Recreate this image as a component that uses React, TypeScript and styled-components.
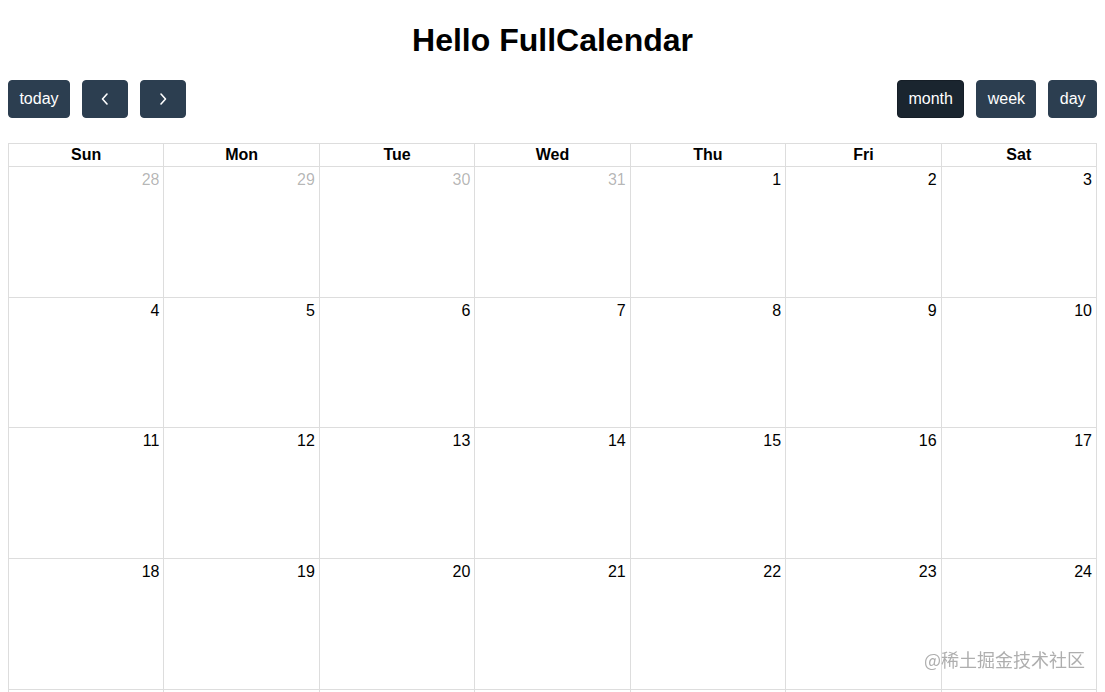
import React from 'react';
import styled, { createGlobalStyle, css } from 'styled-components';

const GlobalStyle = createGlobalStyle`
  body {
    margin: 0 8px;
    font-family: "Liberation Sans", Arial, Helvetica, sans-serif;
    color: #000;
    background: #fff;
  }
`;

const Page = styled.div`
  display: flow-root;
`;

const Title = styled.h1`
  font-size: 32px;
  font-weight: 700;
  text-align: center;
  margin: 22px 0 21px;
  line-height: 37px;
`;

const Toolbar = styled.div`
  display: flex;
  justify-content: space-between;
  align-items: center;
  margin-bottom: 25px;
`;

const ButtonGroup = styled.div`
  display: flex;
  gap: 12px;
`;

const ToolButton = styled.button<{ $active?: boolean; $icon?: boolean }>`
  display: inline-flex;
  align-items: center;
  justify-content: center;
  height: 38px;
  padding: 0 10.4px;
  font-family: "Liberation Sans", Arial, Helvetica, sans-serif;
  font-size: 16px;
  line-height: 24px;
  color: #fff;
  background: #2c3e50;
  border: 1px solid #2c3e50;
  border-radius: 4px;
  cursor: pointer;
  ${(p) =>
    p.$active &&
    css`
      background: #1a252f;
      border-color: #151e27;
    `}
  ${(p) =>
    p.$icon &&
    css`
      width: 46px;
    `}
`;

const Grid = styled.div`
  display: grid;
  grid-template-columns: repeat(7, 1fr);
  border-right: 1px solid #ddd;
  border-bottom: 1px solid #ddd;
`;

const HeadCell = styled.div`
  border-left: 1px solid #ddd;
  border-top: 1px solid #ddd;
  padding: 2px 4px;
  height: 23px;
  box-sizing: border-box;
  text-align: center;
  font-weight: 700;
  font-size: 16px;
  line-height: 18px;
`;

const DayCell = styled.div`
  border-left: 1px solid #ddd;
  border-top: 1px solid #ddd;
  height: 130.7px;
  box-sizing: border-box;
  display: flex;
  justify-content: flex-end;
  align-items: flex-start;
`;

const DayNumber = styled.span<{ $other?: boolean }>`
  padding: 4px;
  font-size: 16px;
  line-height: 18px;
  color: ${(p) => (p.$other ? 'rgba(0, 0, 0, 0.3)' : '#000')};
`;

const Watermark = styled.div`
  position: fixed;
  right: 20px;
  bottom: 20px;
  font-family: "Noto Sans CJK SC", "Liberation Sans", sans-serif;
  font-size: 18px;
  color: rgba(140, 140, 140, 0.7);
  text-shadow: 0 0 1px rgba(255, 255, 255, 0.8);
  pointer-events: none;
`;

const Chevron: React.FC<{ dir: 'left' | 'right' }> = ({ dir }) => (
  <svg width="10" height="16" viewBox="0 0 10 16" fill="none">
    <path
      d={dir === 'left' ? 'M7 3 L2.5 8 L7 13' : 'M3 3 L7.5 8 L3 13'}
      stroke="#fff"
      strokeWidth="1.6"
      strokeLinecap="round"
      strokeLinejoin="round"
    />
  </svg>
);

const weekdays = ['Sun', 'Mon', 'Tue', 'Wed', 'Thu', 'Fri', 'Sat'];

// June 2023, six weeks starting Sun May 28
const buildDays = () => {
  const days: { n: number; other: boolean }[] = [];
  [28, 29, 30, 31].forEach((n) => days.push({ n, other: true }));
  for (let n = 1; n <= 30; n++) days.push({ n, other: false });
  let n = 1;
  while (days.length < 42) days.push({ n: n++, other: true });
  return days;
};

const App: React.FC = () => {
  const days = buildDays();
  return (
    <Page>
      <GlobalStyle />
      <Title>Hello FullCalendar</Title>
      <Toolbar>
        <ButtonGroup>
          <ToolButton>today</ToolButton>
          <ToolButton $icon aria-label="prev">
            <Chevron dir="left" />
          </ToolButton>
          <ToolButton $icon aria-label="next">
            <Chevron dir="right" />
          </ToolButton>
        </ButtonGroup>
        <ButtonGroup>
          <ToolButton $active>month</ToolButton>
          <ToolButton>week</ToolButton>
          <ToolButton>day</ToolButton>
        </ButtonGroup>
      </Toolbar>
      <Grid>
        {weekdays.map((d) => (
          <HeadCell key={d}>{d}</HeadCell>
        ))}
        {days.map((d, i) => (
          <DayCell key={i}>
            <DayNumber $other={d.other}>{d.n}</DayNumber>
          </DayCell>
        ))}
      </Grid>
      <Watermark>@稀土掘金技术社区</Watermark>
    </Page>
  );
};

export default App;
